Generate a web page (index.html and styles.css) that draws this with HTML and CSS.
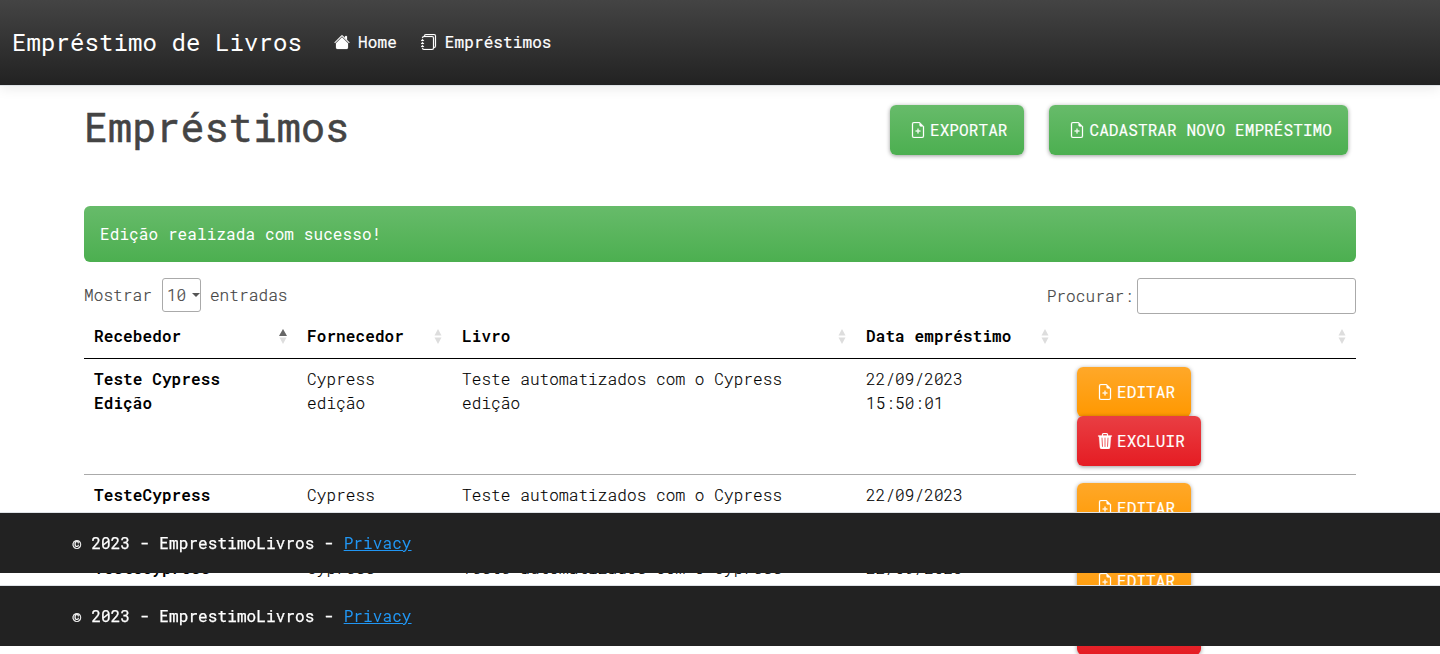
FILE: index.html
```html
<!DOCTYPE html>
<html lang="pt-BR">
<head>
<meta charset="utf-8">
<title>Empréstimo de Livros</title>
<link rel="stylesheet" href="styles.css">
</head>
<body>
<svg class="sprite" aria-hidden="true">
  <symbol id="house" viewBox="0 0 16 16"><path d="m8 3.293 6 6V13.5a1.5 1.5 0 0 1-1.5 1.5h-9A1.5 1.5 0 0 1 2 13.5V9.293l6-6zm5-.793V6l-2-2V2.5a.5.5 0 0 1 .5-.5h1a.5.5 0 0 1 .5.5z"/><path d="M7.293 1.5a1 1 0 0 1 1.414 0l6.647 6.646a.5.5 0 0 1-.708.708L8 2.207 1.354 8.854a.5.5 0 1 1-.708-.708L7.293 1.5z"/></symbol>
  <symbol id="journals" viewBox="0 0 16 16"><path d="M5 0h8a2 2 0 0 1 2 2v10a2 2 0 0 1-2 2 2 2 0 0 1-2 2H3a2 2 0 0 1-2-2h1a1 1 0 0 0 1 1h8a1 1 0 0 0 1-1V4a1 1 0 0 0-1-1H3a1 1 0 0 0-1 1H1a2 2 0 0 1 2-2h8a2 2 0 0 1 2 2v9a1 1 0 0 0 1-1V2a1 1 0 0 0-1-1H5a1 1 0 0 0-1 1H3a2 2 0 0 1 2-2z"/><path d="M1 6v-.5a.5.5 0 0 1 1 0V6h.5a.5.5 0 0 1 0 1h-2a.5.5 0 0 1 0-1H1zm0 3v-.5a.5.5 0 0 1 1 0V9h.5a.5.5 0 0 1 0 1h-2a.5.5 0 0 1 0-1H1zm0 2.5v.5H.5a.5.5 0 0 0 0 1h2a.5.5 0 0 0 0-1H2v-.5a.5.5 0 0 0-1 0z"/></symbol>
  <symbol id="file-plus" viewBox="0 0 16 16"><path d="M8 6.5a.5.5 0 0 1 .5.5v1.5H10a.5.5 0 0 1 0 1H8.5V11a.5.5 0 0 1-1 0V9.5H6a.5.5 0 0 1 0-1h1.5V7a.5.5 0 0 1 .5-.5z"/><path d="M14 4.5V14a2 2 0 0 1-2 2H4a2 2 0 0 1-2-2V2a2 2 0 0 1 2-2h5.5L14 4.5zm-3 0A1.5 1.5 0 0 1 9.500 3V1H4a1 1 0 0 0-1 1v12a1 1 0 0 0 1 1h8a1 1 0 0 0 1-1V4.500h-2z"/></symbol>
  <symbol id="trash" viewBox="0 0 16 16"><path d="M11 1.500v1h3.500a.5.5 0 0 1 0 1h-.538l-.853 10.660A2 2 0 0 1 11.115 16h-6.230a2 2 0 0 1-1.994-1.840L2.038 3.500H1.500a.5.5 0 0 1 0-1H5v-1A1.500 1.500 0 0 1 6.500 0h3A1.500 1.500 0 0 1 11 1.500Zm-5 0v1h4v-1a.5.5 0 0 0-.5-.5h-3a.5.5 0 0 0-.5.5ZM4.500 5.029l.5 8.500a.5.5 0 1 0 .998-.060l-.5-8.500a.5.5 0 1 0-.998.060Zm6.530-.528a.5.5 0 0 0-.528.470l-.5 8.500a.5.5 0 0 0 .998.058l.5-8.500a.5.5 0 0 0-.470-.528ZM8 4.500a.5.5 0 0 0-.5.5v8.500a.5.5 0 0 0 1 0V5a.5.5 0 0 0-.5-.5Z"/></symbol>
  <symbol id="sort" viewBox="0 0 8 16"><path class="up" d="M4 1 7.500 7.500h-7z"/><path class="down" d="M.5 9.500h7L4 16z"/></symbol>
</svg>

<header class="navbar">
  <a class="brand">Empréstimo de Livros</a>
  <nav class="nav">
    <a class="nav-link"><svg class="icon"><use href="#house"/></svg>Home</a>
    <a class="nav-link"><svg class="icon"><use href="#journals"/></svg>Empréstimos</a>
  </nav>
</header>

<main class="container">
  <div class="page-head">
    <h1>Empréstimos</h1>
    <div class="actions">
      <a class="btn success"><svg class="icon"><use href="#file-plus"/></svg>EXPORTAR</a>
      <a class="btn success"><svg class="icon"><use href="#file-plus"/></svg>CADASTRAR NOVO EMPRÉSTIMO</a>
    </div>
  </div>

  <div class="alert">Edição realizada com sucesso!</div>

  <div class="controls">
    <div class="length">Mostrar <span class="select">10<i class="caret"></i></span> entradas</div>
    <label class="filter">Procurar:<input type="text"></label>
  </div>

  <table>
    <colgroup><col class="c1"><col class="c2"><col class="c3"><col class="c4"><col class="c5"></colgroup>
    <thead>
      <tr>
        <th><div class="th">Recebedor<svg class="sort asc"><use href="#sort"/></svg><i class="asc-mark"></i></div></th>
        <th><div class="th">Fornecedor<svg class="sort"><use href="#sort"/></svg></div></th>
        <th><div class="th">Livro<svg class="sort"><use href="#sort"/></svg></div></th>
        <th><div class="th">Data empréstimo<svg class="sort"><use href="#sort"/></svg></div></th>
        <th><div class="th"><svg class="sort"><use href="#sort"/></svg></div></th>
      </tr>
    </thead>
    <tbody>
      <tr class="tall">
        <th>Teste Cypress Edição</th><td>Cypress edição</td><td>Teste automatizados com o Cypress edição</td><td>22/09/2023 15:50:01</td>
        <td><div class="row-actions"><a class="btn warning"><svg class="icon"><use href="#file-plus"/></svg>EDITAR</a><a class="btn danger"><svg class="icon"><use href="#trash"/></svg>EXCLUIR</a></div></td>
      </tr>
      <tr class="short">
        <th>TesteCypress</th><td>Cypress</td><td>Teste automatizados com o Cypress</td><td>22/09/2023</td>
        <td><div class="row-actions"><a class="btn warning"><svg class="icon"><use href="#file-plus"/></svg>EDITAR</a></div></td>
      </tr>
      <tr class="tall">
        <th>TesteCypress</th><td>Cypress</td><td>Teste automatizados com o Cypress</td><td>22/09/2023</td>
        <td><div class="row-actions"><a class="btn warning"><svg class="icon"><use href="#file-plus"/></svg>EDITAR</a><a class="btn danger"><svg class="icon"><use href="#trash"/></svg>EXCLUIR</a></div></td>
      </tr>
    </tbody>
  </table>
</main>

<div class="footers">
  <footer><span class="copy">©</span> 2023 - EmprestimoLivros - <a>Privacy</a></footer>
  <footer><span class="copy">©</span> 2023 - EmprestimoLivros - <a>Privacy</a></footer>
</div>
</body>
</html>
```
FILE: styles.css
```css
* { box-sizing: border-box; }
html { overflow: hidden; }
body {
  margin: 0;
  height: 654px;
  overflow: hidden;
  background: #fff;
  color: #444;
  font: 300 16px/24px "Roboto Mono", "Liberation Mono", monospace;
  letter-spacing: 0.1px;
}
.sprite { display: none; }
.icon { width: 16px; height: 16px; fill: currentColor; flex: none; }

.navbar {
  display: flex;
  align-items: center;
  height: 85px;
  padding: 0 12px 2px;
  color: #fff;
  background: linear-gradient(#444, #222);
  box-shadow: 0 1px 0 #dee2e6, 0 4px 12px rgba(0, 0, 0, 0.08);
}
.brand { font-size: 24px; font-weight: 400; margin-right: 20px; }
.nav { display: flex; }
.nav-link {
  display: flex;
  align-items: center;
  gap: 8px;
  padding: 0 12px;
  font-weight: 400;
  -webkit-text-stroke: 0.2px;
}
.nav-link .icon { stroke: currentColor; stroke-width: 0.2px; }

.container { width: 1272px; margin: 0 auto; }
.page-head {
  display: flex;
  justify-content: space-between;
  height: 121px;
  padding: 20px 8px 0 0;
}
h1 {
  margin: -1px 0 0;
  font-size: 40px;
  line-height: 45px;
  font-weight: 400;
  -webkit-text-stroke: 0.5px;
}
.actions { display: flex; gap: 25px; }
.btn {
  display: flex;
  align-items: center;
  gap: 4px;
  height: 50px;
  padding: 0 16px 0 20px;
  color: #fff;
  border-radius: 6px;
  box-shadow: 0 1px 4px rgba(0, 0, 0, 0.4);
  font-weight: 400;
  -webkit-text-stroke: 0.15px;
  white-space: nowrap;
}
.actions .btn:first-child { width: 134px; gap: 3.5px; }
.btn .icon { stroke: currentColor; stroke-width: 0.25px; }
.success { background: linear-gradient(#67bb6a, #4caf50); }
.warning { background: linear-gradient(#ffa829, #ff9800); }
.danger { background: linear-gradient(#e93e43, #e51c23); }

.alert {
  height: 56px;
  padding: 16px;
  color: #fff;
  font-weight: 400;
  border-radius: 6px;
  background: linear-gradient(#67bb6a, #4caf50);
}
.controls {
  display: flex;
  justify-content: space-between;
  height: 52px;
  padding-top: 16px;
  -webkit-text-stroke: 0.2px;
}
.length { display: flex; align-items: center; height: 34px; gap: 9px; }
.select {
  display: flex;
  align-items: center;
  justify-content: space-between;
  width: 39px;
  height: 34px;
  margin-left: 1px;
  padding: 0 0 0 4px;
  border: 1px solid #aaa;
  border-radius: 3px;
}
.caret {
  border: 4px solid transparent;
  border-top-color: #555;
  border-bottom: 0;
}
.filter { display: flex; align-items: center; gap: 3px; height: 36px; }
.filter input {
  width: 219px;
  height: 36px;
  border: 1px solid #aaa;
  border-radius: 3px;
  background: transparent;
}

table {
  width: 1272px;
  table-layout: fixed;
  border-collapse: separate;
  border-spacing: 0;
  color: #000;
}
.c1 { width: 213px; }
.c2 { width: 155px; }
.c3 { width: 404px; }
.c4 { width: 203px; }
.c5 { width: 297px; }
th, td { text-align: left; vertical-align: top; }
td { font-weight: 300; -webkit-text-stroke: 0.15px; }
th { font-weight: 600; }
thead th {
  height: 44px;
  padding: 10px;
  border-bottom: 1px solid #000;
}
.th { display: flex; position: relative; height: 24px; white-space: nowrap; }
.sort { width: 8px; height: 16px; margin: 4px 0 0 auto; fill: #ddd; }
.asc-mark {
  position: absolute;
  right: 0;
  top: 5px;
  border: 4px solid transparent;
  border-top: 0;
  border-bottom: 7px solid #666;
}
tbody th, tbody td { padding: 8px 10px; border-bottom: 1px solid #aaa; }
tbody td:last-child { padding: 8px 18px; }
.tall { height: 116px; }
.short { height: 73px; }
.row-actions { display: flex; flex-direction: column; align-items: flex-start; }
.row-actions .warning { margin-bottom: -1px; }
.row-actions .danger { position: relative; }

.footers {
  position: fixed;
  left: 0;
  right: 0;
  bottom: 8px;
  display: flex;
  flex-direction: column;
  gap: 12px;
}
footer {
  height: 61px;
  padding: 0 72px;
  line-height: 60px;
  font-weight: 400;
  -webkit-text-stroke: 0.25px;
  color: #fff;
  background: #222;
  border-top: 1px solid #dee2e6;
}
.copy { display: inline-block; width: 9.7px; }
footer a { color: #2196f3; text-decoration: underline; -webkit-text-stroke: 0; }
```
